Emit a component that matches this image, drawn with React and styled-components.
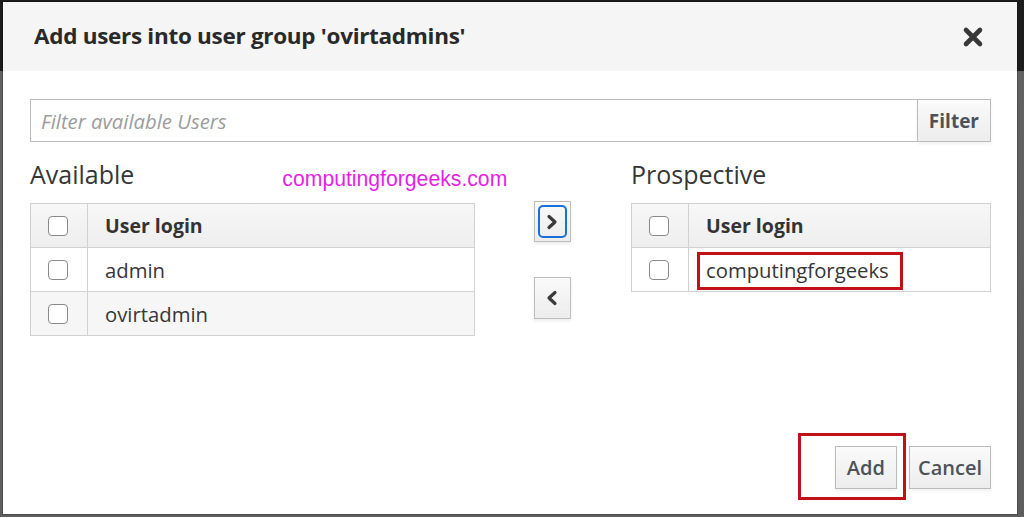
import React from "react";
import styled, { createGlobalStyle } from "styled-components";

const Global = createGlobalStyle`
  html, body { margin: 0; padding: 0; }
  body {
    width: 1024px;
    height: 517px;
    overflow: hidden;
    background: linear-gradient(to bottom, #1c1c1c 0, #1c1c1c 71px, #626262 71px, #5e5e5e 100%);
    font-family: "Open Sans", "Liberation Sans", sans-serif;
    color: #363636;
  }
  #root { height: 517px; }
`;

const Page = styled.div`
  height: 517px;
  padding: 2px 7px 3px 3px;
  box-sizing: border-box;
  display: flex;
`;

const Modal = styled.div`
  flex: 1;
  background: #fff;
  display: flex;
  flex-direction: column;
  box-shadow: 0 0 0 1px rgba(0,0,0,0.2);
`;

const Header = styled.div`
  height: 69px;
  background: #f5f5f5;
  display: flex;
  align-items: center;
  justify-content: space-between;
  padding: 0 32px 0 31px;
  flex-shrink: 0;
`;

const Title = styled.h1`
  margin: 0;
  font-size: 22.5px;
  font-weight: 700;
  color: #292929;
  letter-spacing: -0.3px;
  transform: scaleY(0.92);
`;

const Close = styled.button`
  border: 0;
  background: none;
  padding: 0;
  width: 24px;
  height: 24px;
  display: flex;
  align-items: center;
  justify-content: center;
  cursor: pointer;
`;

const Body = styled.div`
  flex: 1;
  padding: 28px 26px 0 27px;
  display: flex;
  flex-direction: column;
`;

const FilterRow = styled.div`
  display: flex;
  height: 43px;
`;

const FilterInput = styled.input`
  flex: 1;
  border: 1px solid #bbb;
  border-right: 0;
  padding: 0 10px;
  font-family: inherit;
  font-size: 20.3px;
  color: #363636;
  outline: none;
  &::placeholder { color: #9c9c9c; font-style: italic; }
`;

const Btn = styled.button`
  font-family: inherit;
  font-size: ${p => p.$fs || 20}px;
  font-weight: ${p => (p.$bold ? 700 : 600)};
  color: #4d5258;
  background: linear-gradient(to bottom, #fafafa 0%, #ededed 100%);
  border: 1px solid #bbb;
  padding: 0 ${p => p.$px || 11}px;
  height: ${p => p.$h || 43}px;
  cursor: pointer;
  position: relative;
  box-shadow: 0 2px 3px rgba(0,0,0,0.06);
`;

const Columns = styled.div`
  display: grid;
  grid-template-columns: 445px 156px 360px;
  margin-top: 16px;
`;

const Column = styled.div`
  display: flex;
  flex-direction: column;
`;

const HeadingRow = styled.div`
  display: flex;
  align-items: center;
  height: 32px;
  margin-bottom: 13px;
`;

const Heading = styled.h2`
  margin: 0;
  font-size: 25px;
  font-weight: 400;
  color: #363636;
`;

const Watermark = styled.span`
  margin-left: 148px;
  margin-top: 9px;
  font-family: "Liberation Sans", Arial, sans-serif;
  font-size: 21.2px;
  color: #e61ee6;
`;

const Table = styled.div`
  border: 1px solid #d1d1d1;
  display: flex;
  flex-direction: column;
`;

const Row = styled.div`
  display: grid;
  grid-template-columns: 57px 1fr;
  height: 43px;
  background: ${p => (p.$head ? "linear-gradient(to bottom, #f7f7f7, #eeeeee)" : p.$alt ? "#f6f6f6" : "#fff")};
  & + & { border-top: 1px solid #d1d1d1; }
`;

const CheckCell = styled.div`
  display: flex;
  align-items: center;
  justify-content: center;
  border-right: 1px solid #d1d1d1;
`;

const Checkbox = styled.span`
  width: 20px;
  height: 20px;
  border: 1px solid #8a8a8a;
  border-radius: 4px;
  background: #fff;
  box-sizing: border-box;
  margin-right: 3px;
`;

const TextCell = styled.div`
  display: flex;
  align-items: center;
  padding-left: 17px;
  font-size: ${p => (p.$head ? 19.5 : 20.3)}px;
  font-weight: ${p => (p.$head ? 700 : 400)};
  color: ${p => (p.$head ? "#333" : "#363636")};
`;

const Marked = styled.span`
  position: relative;
  &::after {
    content: "";
    position: absolute;
    left: -9px;
    right: -14px;
    top: -4px;
    bottom: -6px;
    border: 3px solid #c0101a;
  }
`;

const Arrows = styled.div`
  display: flex;
  flex-direction: column;
  align-items: center;
  padding-top: 43px;
  gap: 35px;
  margin-left: -2px;
`;

const ArrowBtn = styled.button`
  width: 37px;
  height: ${p => (p.$focus ? 41 : 42)}px;
  border: 1px solid #bdbdbd;
  background: linear-gradient(to bottom, #fafafa, #ececec);
  box-shadow: 0 2px 3px rgba(0,0,0,0.08);
  display: flex;
  align-items: center;
  justify-content: center;
  padding: 0;
  position: relative;
  cursor: pointer;
  ${p => p.$focus && `
    &::after {
      content: "";
      position: absolute;
      inset: 3px;
      border: 2.5px solid #1b6fd6;
      border-radius: 5px;
    }
  `}
`;

const Footer = styled.div`
  margin-top: auto;
  display: flex;
  justify-content: flex-end;
  gap: 12px;
  padding: 0 26px 25px 0;
`;

const AddMark = styled.span`
  position: absolute;
  left: -38px;
  right: -10px;
  top: -14px;
  bottom: -12px;
  border: 3px solid #c0101a;
  pointer-events: none;
`;

const Chevron = ({ dir }) => (
  <svg width="14" height="16" viewBox="0 0 14 16">
    <path
      d={dir === "right" ? "M4 2.5 L10 8 L4 13.5" : "M10 2.5 L4 8 L10 13.5"}
      fill="none"
      stroke="#3a3a3a"
      strokeWidth="3.2"
      strokeLinecap="round"
      strokeLinejoin="round"
    />
  </svg>
);

const UserTable = ({ rows, marked }) => (
  <Table>
    <Row $head>
      <CheckCell><Checkbox /></CheckCell>
      <TextCell $head>User login</TextCell>
    </Row>
    {rows.map((r, i) => (
      <Row key={r} $alt={i % 2 === 1}>
        <CheckCell><Checkbox /></CheckCell>
        <TextCell>{marked === r ? <Marked>{r}</Marked> : r}</TextCell>
      </Row>
    ))}
  </Table>
);

export default function App() {
  return (
    <>
      <Global />
      <Page>
        <Modal>
          <Header>
            <Title>Add users into user group 'ovirtadmins'</Title>
            <Close aria-label="Close">
              <svg width="22" height="22" viewBox="0 0 22 22">
                <path d="M4 4 L18 18 M18 4 L4 18" stroke="#383838" strokeWidth="4.6" strokeLinecap="round" />
              </svg>
            </Close>
          </Header>
          <Body>
            <FilterRow>
              <FilterInput placeholder="Filter available Users" />
              <Btn $bold $fs={19} $px={11}>Filter</Btn>
            </FilterRow>
            <Columns>
              <Column>
                <HeadingRow>
                  <Heading>Available</Heading>
                  <Watermark>computingforgeeks.com</Watermark>
                </HeadingRow>
                <UserTable rows={["admin", "ovirtadmin"]} />
              </Column>
              <Arrows>
                <ArrowBtn $focus aria-label="Add"><Chevron dir="right" /></ArrowBtn>
                <ArrowBtn aria-label="Remove"><Chevron dir="left" /></ArrowBtn>
              </Arrows>
              <Column>
                <HeadingRow>
                  <Heading>Prospective</Heading>
                </HeadingRow>
                <UserTable rows={["computingforgeeks"]} marked="computingforgeeks" />
              </Column>
            </Columns>
          </Body>
          <Footer>
            <Btn $px={11}>
              Add
              <AddMark />
            </Btn>
            <Btn $px={8}>Cancel</Btn>
          </Footer>
        </Modal>
      </Page>
    </>
  );
}
